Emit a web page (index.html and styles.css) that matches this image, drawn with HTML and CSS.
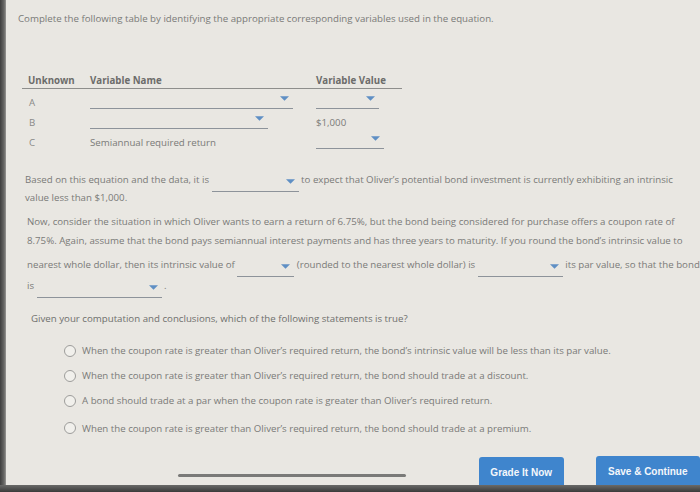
FILE: index.html
```html
<!DOCTYPE html>
<html>
<head>
<meta charset="utf-8">
<link rel="stylesheet" href="styles.css">
</head>
<body>
<div class="screen">
  <div class="edge-left"></div>
  <main class="page">
    <p class="intro">Complete the following table by identifying the appropriate corresponding variables used in the equation.</p>

    <div class="vars">
      <div class="vrow head">
        <span class="c-unk">Unknown</span>
        <span class="c-name">Variable Name</span>
        <span class="c-val">Variable Value</span>
      </div>
      <div class="vrow">
        <span class="c-unk">A</span>
        <span class="c-name"><span class="dd w203"><svg class="arr" viewBox="0 0 10 5"><path d="M0 0H10L5 5Z"/></svg></span></span>
        <span class="c-val"><span class="dd w63"><svg class="arr" viewBox="0 0 10 5"><path d="M0 0H10L5 5Z"/></svg></span></span>
      </div>
      <div class="vrow">
        <span class="c-unk">B</span>
        <span class="c-name"><span class="dd w178"><svg class="arr" viewBox="0 0 10 5"><path d="M0 0H10L5 5Z"/></svg></span></span>
        <span class="c-val">$1,000</span>
      </div>
      <div class="vrow">
        <span class="c-unk">C</span>
        <span class="c-name">Semiannual required return</span>
        <span class="c-val"><span class="dd w68"><svg class="arr" viewBox="0 0 10 5"><path d="M0 0H10L5 5Z"/></svg></span></span>
      </div>
    </div>

    <div class="para p1">
      <div class="line">Based on this equation and the data, it is <span class="dd w87"><svg class="arr" viewBox="0 0 10 5"><path d="M0 0H10L5 5Z"/></svg></span> to expect that Oliver’s potential bond investment is currently exhibiting an intrinsic</div>
      <div class="line">value less than $1,000.</div>
    </div>

    <div class="para p2">
      <div class="line first">Now, consider the situation in which Oliver wants to earn a return of 6.75%, but the bond being considered for purchase offers a coupon rate of</div>
      <div class="line">8.75%. Again, assume that the bond pays semiannual interest payments and has three years to maturity. If you round the bond’s intrinsic value to</div>
      <div class="line tall">nearest whole dollar, then its intrinsic value of <span class="dd w57"><svg class="arr" viewBox="0 0 10 5"><path d="M0 0H10L5 5Z"/></svg></span> (rounded to the nearest whole dollar) is <span class="dd w85"><svg class="arr" viewBox="0 0 10 5"><path d="M0 0H10L5 5Z"/></svg></span> its par value, so that the bond</div>
      <div class="line last">is <span class="dd w125"><svg class="arr" viewBox="0 0 10 5"><path d="M0 0H10L5 5Z"/></svg></span> .</div>
    </div>

    <p class="question">Given your computation and conclusions, which of the following statements is true?</p>

    <ul class="options">
      <li><span class="radio"></span>When the coupon rate is greater than Oliver’s required return, the bond’s intrinsic value will be less than its par value.</li>
      <li><span class="radio"></span>When the coupon rate is greater than Oliver’s required return, the bond should trade at a discount.</li>
      <li><span class="radio"></span>A bond should trade at a par when the coupon rate is greater than Oliver’s required return.</li>
      <li><span class="radio"></span>When the coupon rate is greater than Oliver’s required return, the bond should trade at a premium.</li>
    </ul>

    <div class="footer">
      <div class="scrollbar"></div>
      <button class="btn grade">Grade It Now</button>
      <button class="btn save">Save &amp; Continue</button>
    </div>
  </main>
  <div class="edge-bottom"></div>
</div>
</body>
</html>
```

FILE: styles.css
```css
html, body {
  margin: 0;
  padding: 0;
  background: #e9e7e2;
}
.screen {
  position: relative;
  width: 700px;
  height: 492px;
  overflow: hidden;
  display: flex;
  background: #e9e7e2;
  font-family: "Open Sans", "DejaVu Sans", sans-serif;
  font-size: 9.7px;
  color: #7a7a78;
}
.edge-left {
  width: 6px;
  flex: none;
  background: linear-gradient(90deg, #3e3e3e, #6a6a68 70%, #9a9996);
}
.page {
  flex: 1;
  min-width: 0;
  padding-top: 13px;
  overflow: hidden;
}
.intro {
  margin: 0 0 0 12px;
  line-height: 12px;
  white-space: nowrap;
}

/* table */
.vars {
  margin: 49px 0 0 16px;
  width: 380px;
}
.vrow {
  display: grid;
  grid-template-columns: 68px 226px 1fr;
  align-items: center;
  height: 20px;
}
.vrow.head {
  height: 12px;
  padding-bottom: 2px;
  border-bottom: 1px solid #8e8e8c;
  margin-bottom: 3px;
  font-weight: 700;
  color: #6c6c6a;
  align-items: end;
}
.vrow .c-unk { padding-left: 7px; color: #8a8a88; }
.vrow.head .c-unk { padding-left: 6px; color: #6c6c6a; }

/* dropdown */
.dd {
  display: inline-flex;
  justify-content: flex-end;
  align-items: flex-start;
  height: 13px;
  border-bottom: 1px solid #8d939a;
  vertical-align: -1px;
  box-sizing: border-box;
  padding-right: 4px;
}
.vrow .dd { vertical-align: top; margin-top: 0; }
.arr {
  width: 9px;
  height: 5px;
  fill: #5f8fc4;
}
.w57 { width: 57px; }
.w63 { width: 63px; }
.w68 { width: 68px; }
.w85 { width: 85px; }
.w87 { width: 87px; }
.w125 { width: 125px; }
.w178 { width: 178px; }
.w203 { width: 203px; }

/* paragraphs */
.para {
  white-space: nowrap;
}
.para .line {
  height: 18px;
  line-height: 18px;
}
.p1 {
  margin: 19px 0 0 19px;
}
.p2 {
  margin: 5px 0 0 21px;
}
.p2 .line { height: 20px; line-height: 20px; }
.p2 .line.first { height: 19px; line-height: 19px; }
.p2 .line.tall { height: 26px; line-height: 28px; }
.p2 .line.last { height: 18px; line-height: 18px; }

.question {
  margin: 18px 0 0 25px;
  line-height: 12px;
  color: #6f6f6d;
}

.options {
  list-style: none;
  margin: 13px 0 0 58px;
  padding: 0;
}
.options li {
  display: flex;
  align-items: center;
  gap: 6px;
  height: 25px;
  white-space: nowrap;
}
.options li:last-child { height: 27px; padding-top: 3px; box-sizing: border-box; }
.radio {
  width: 10px;
  height: 10px;
  border: 1px solid #9d9d9b;
  border-radius: 50%;
  background: #f1f0ec;
  flex: none;
}

/* footer */
.footer {
  display: flex;
  align-items: flex-start;
  height: 60px;
}
.scrollbar {
  width: 229px;
  height: 3px;
  border-radius: 2px;
  background: #7a7a78;
  margin: 34px 0 0 172px;
}
.btn {
  border: none;
  border-radius: 3px 3px 0 0;
  background: #3f85cd;
  color: #f4f7fb;
  font-family: "Liberation Sans", Arial, sans-serif;
  font-weight: 700;
  font-size: 10px;
  height: 40px;
  padding: 10px 0 0;
  line-height: 12px;
  display: flex;
  justify-content: center;
  align-items: flex-start;
}
.btn.grade {
  width: 85px;
  margin-left: 73px;
  margin-top: 17px;
}
.btn.save {
  width: 105px;
  margin-left: 32px;
  margin-top: 16px;
}
.edge-bottom {
  position: absolute;
  left: 0;
  right: 0;
  bottom: 0;
  height: 7px;
  background: linear-gradient(180deg, #6a6a68, #3a3a3a);
}
```
